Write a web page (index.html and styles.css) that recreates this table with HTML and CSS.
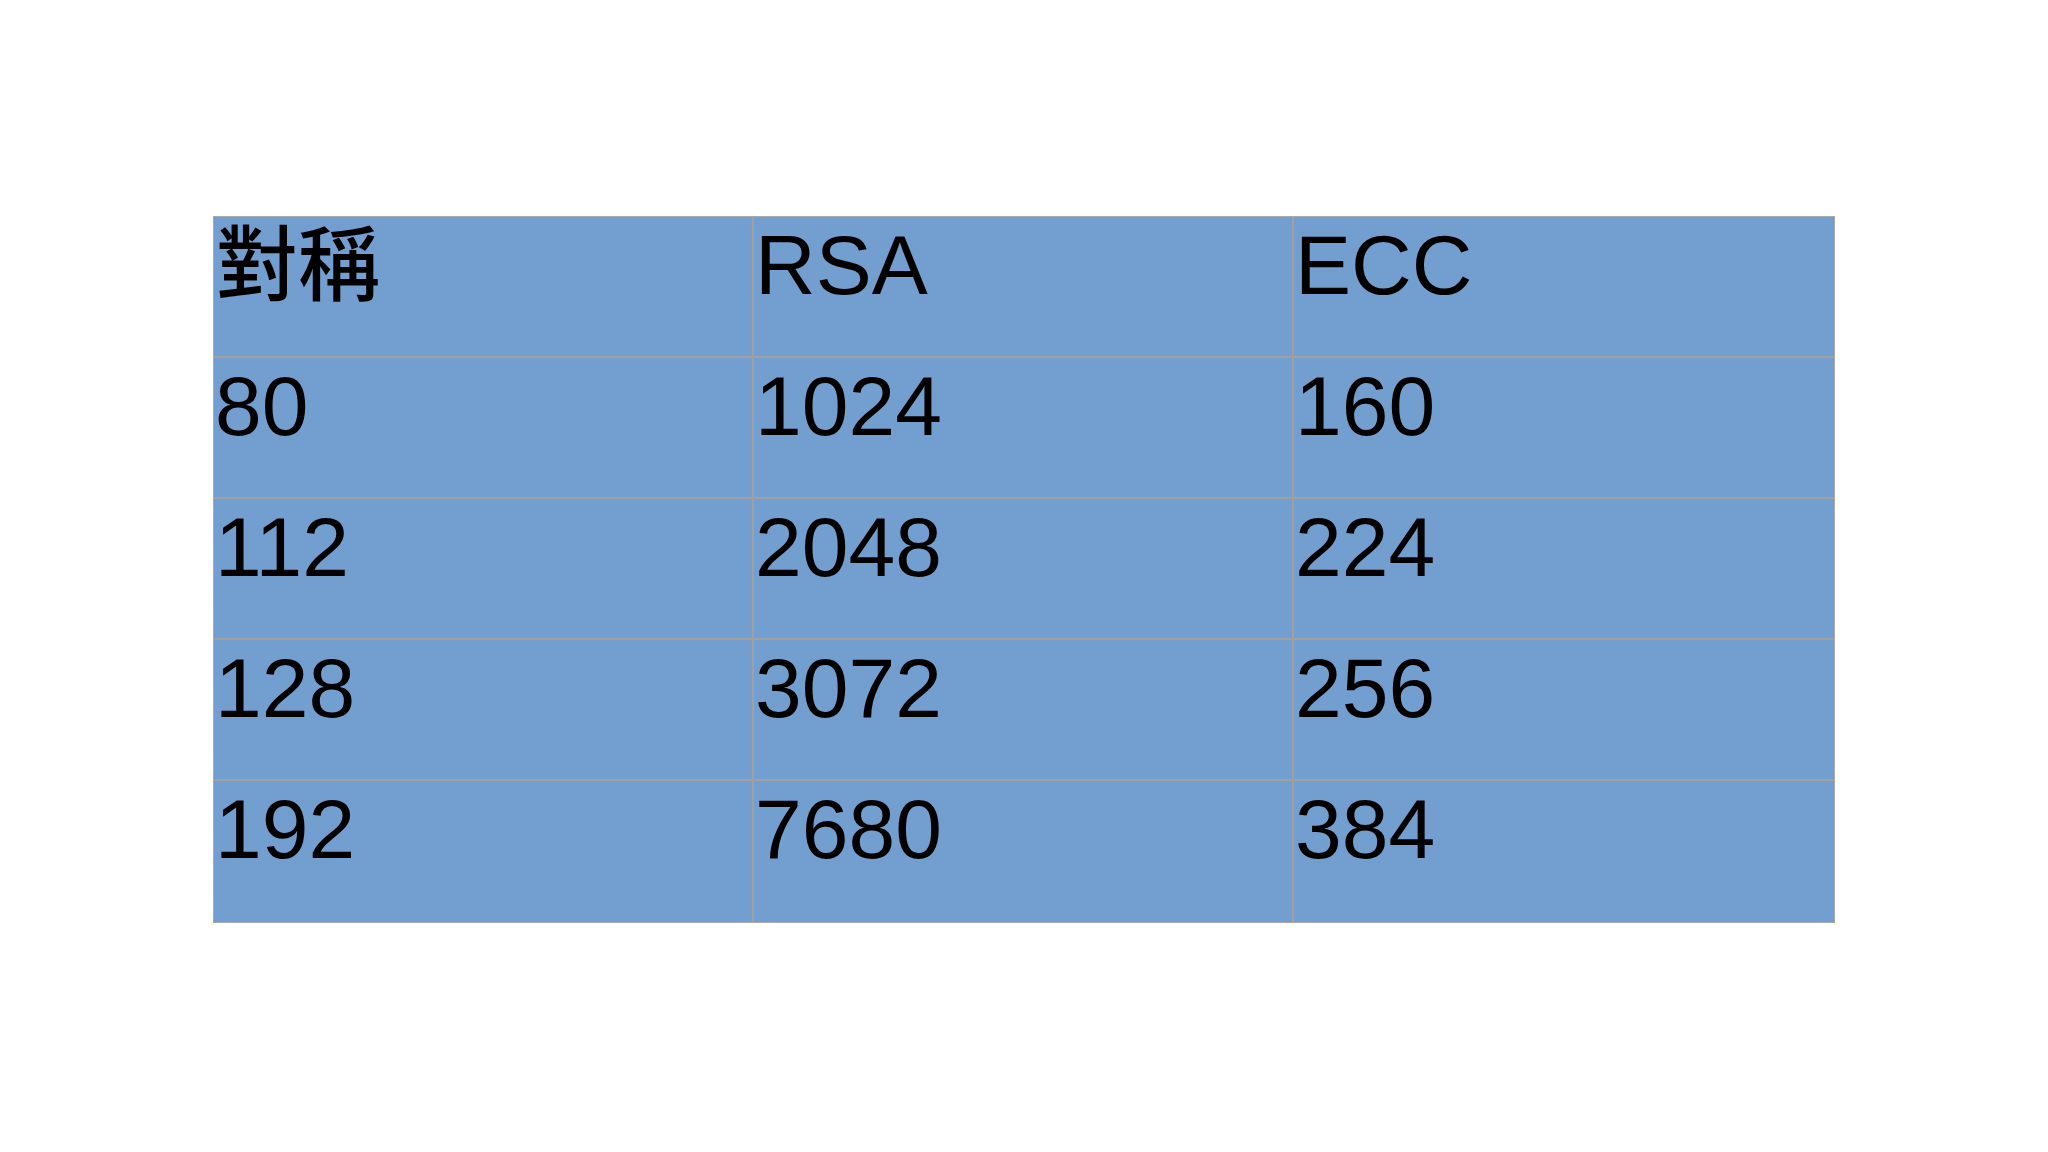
FILE: index.html
```html
<!DOCTYPE html>
<html lang="zh-Hant">
<head>
<meta charset="utf-8">
<title>Key sizes</title>
<link rel="stylesheet" href="styles.css">
</head>
<body>
<div class="slide">
  <div class="grid">
    <div class="cell cjk">對稱</div><div class="cell">RSA</div><div class="cell">ECC</div>
    <div class="cell">80</div><div class="cell">1024</div><div class="cell">160</div>
    <div class="cell">112</div><div class="cell">2048</div><div class="cell">224</div>
    <div class="cell">128</div><div class="cell">3072</div><div class="cell">256</div>
    <div class="cell">192</div><div class="cell">7680</div><div class="cell">384</div>
  </div>
</div>
</body>
</html>
```
FILE: styles.css
```css
html, body {
  margin: 0;
  padding: 0;
  background: #ffffff;
}
.slide {
  width: 2048px;
  height: 1152px;
  padding: 216px 0 0 213px;
  box-sizing: border-box;
}
.grid {
  display: grid;
  grid-template-columns: 540px 540px 540px;
  grid-template-rows: repeat(5, 141px);
  width: 1622px;
  box-sizing: border-box;
  border: 1px solid #aaaaaa;
  background: #729fcf;
}
.cell {
  font-family: "Liberation Sans", Arial, "Noto Sans CJK TC", sans-serif;
  font-size: 84px;
  line-height: 97px;
  color: #000000;
  padding: 0 0 0 1px;
  border-right: 2px solid #a0a0a0;
  border-bottom: 2px solid #a0a0a0;
  box-sizing: border-box;
}
.cell:nth-child(3n) {
  border-right: none;
}
.cell:nth-last-child(-n+3) {
  border-bottom: none;
}
.cjk {
  font-family: "Noto Sans CJK TC", "Liberation Sans", sans-serif;
  font-weight: 500;
  font-size: 82px;
  line-height: 83px;
  padding-left: 2px;
}
```
